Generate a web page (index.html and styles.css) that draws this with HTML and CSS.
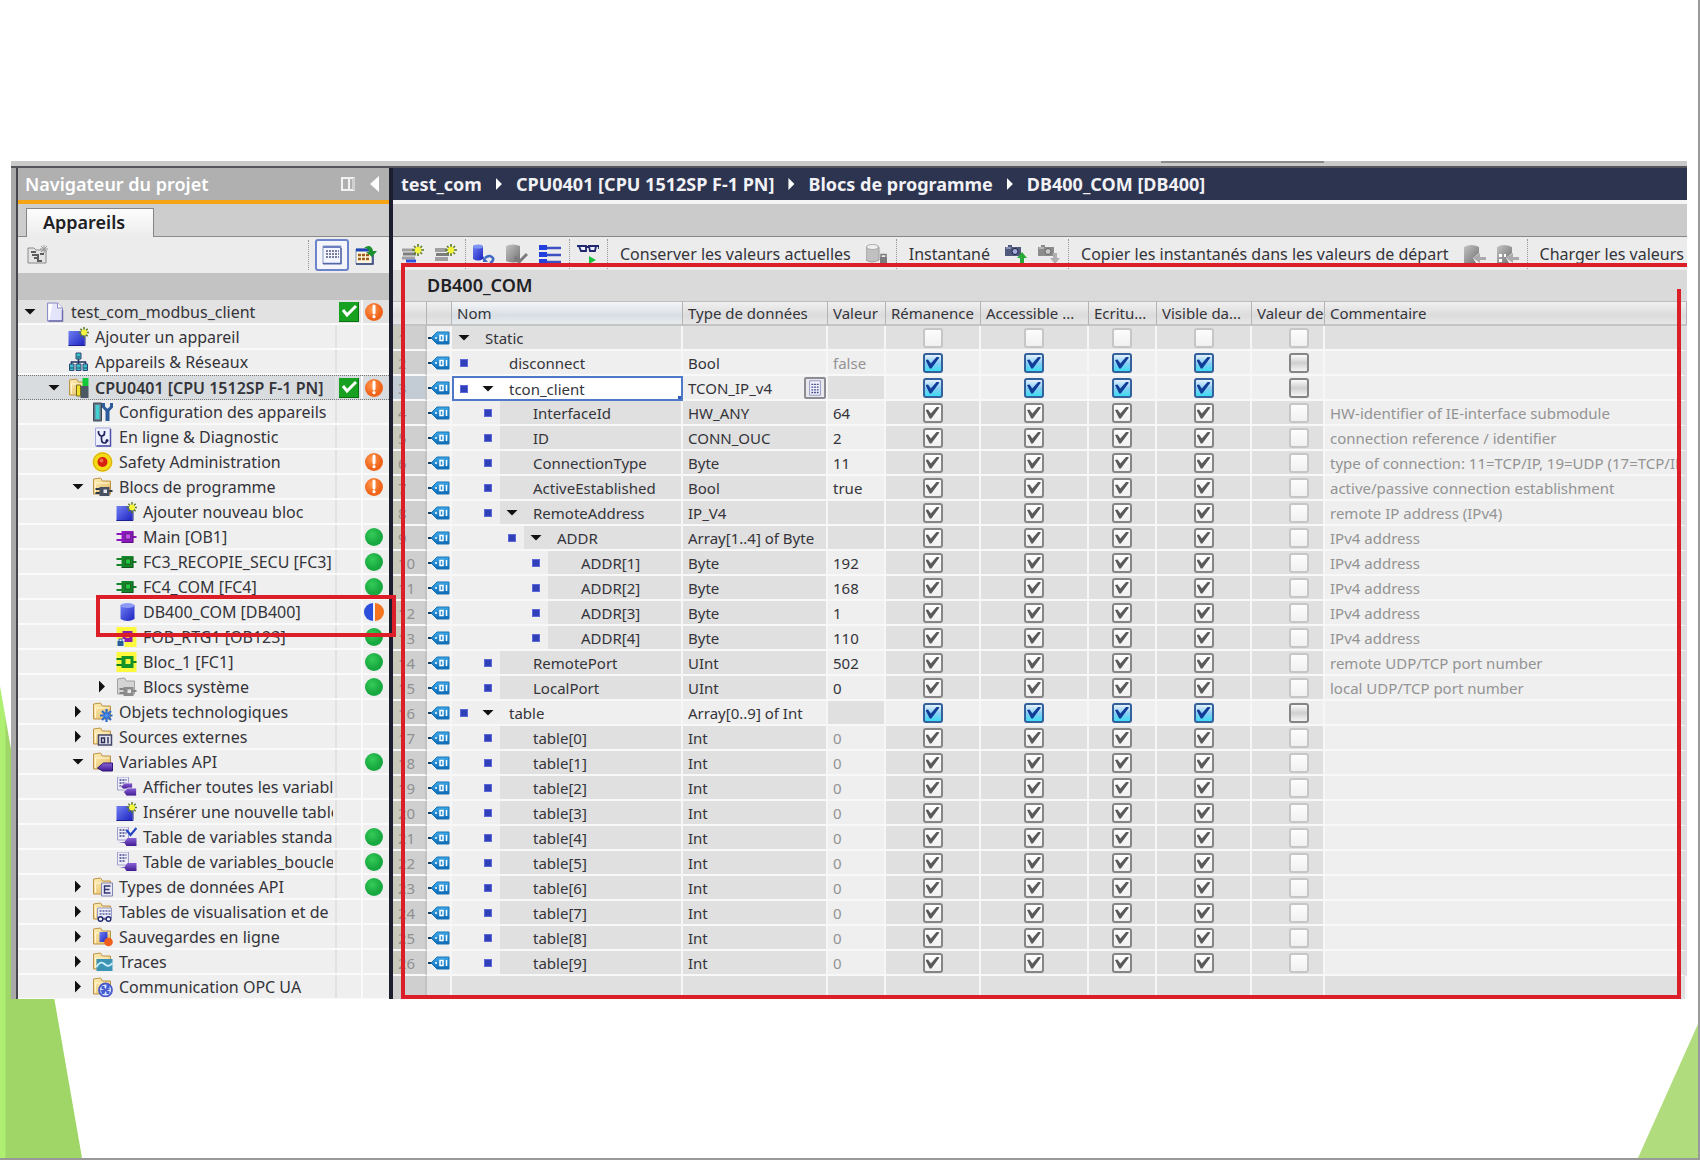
FILE: index.html
```html
<!DOCTYPE html>
<html lang="fr">
<head>
  <meta charset="UTF-8" />
  <meta name="viewport" content="width=device-width, initial-scale=1.0" />
  <title>DB400_COM [DB400]</title>
  <link rel="stylesheet" href="styles.css">
</head>
<body>
  <!-- Icon sprites -->
  <svg class="sprites" aria-hidden="true">
    <defs>
      <linearGradient id="gBlue" x1="0" y1="0" x2="1" y2="1"><stop offset="0" stop-color="#6f7ff2"/><stop offset="1" stop-color="#1c22c0"/></linearGradient>
      <linearGradient id="gGrey" x1="0" y1="0" x2="1" y2="1"><stop offset="0" stop-color="#c4c4c4"/><stop offset="1" stop-color="#707070"/></linearGradient>
      <linearGradient id="gFolder" x1="0" y1="0" x2="1" y2="1"><stop offset="0" stop-color="#fff0b8"/><stop offset="1" stop-color="#e2b860"/></linearGradient>
      <linearGradient id="gTag" x1="0" y1="0" x2="0" y2="1"><stop offset="0" stop-color="#3fa9e8"/><stop offset="1" stop-color="#0c68b4"/></linearGradient>
      <linearGradient id="gPurple" x1="0" y1="0" x2="0" y2="1"><stop offset="0" stop-color="#8a63d8"/><stop offset="1" stop-color="#401a92"/></linearGradient>
      <radialGradient id="gOrange" cx="40%" cy="35%"><stop offset="0" stop-color="#ff9a50"/><stop offset="1" stop-color="#f0641a"/></radialGradient>
      <radialGradient id="gGreen" cx="40%" cy="35%"><stop offset="0" stop-color="#34cc58"/><stop offset="1" stop-color="#18a840"/></radialGradient>
    </defs>
    <symbol id="star" viewBox="0 0 12 12"><path d="M6 0V12M0 6H12M2 2L10 10M10 2L2 10" stroke="#5a7a20" stroke-width="1.6"/><circle cx="6" cy="6" r="3.2" fill="#f4f43c"/></symbol>
    <symbol id="folder" viewBox="0 0 20 20"><path d="M1 17V2L8 1L10 4H18V17Z" fill="url(#gFolder)" stroke="#bd9446"/><path d="M3 16V6H17" fill="none" stroke="#fff6d4"/></symbol>
    <symbol id="page" viewBox="0 0 20 20"><path d="M3 1H13L18 6V19H3Z" fill="#e4e4fa" stroke="#8c8cc4"/><path d="M4 2H8L5 18H4Z" fill="#fff"/><path d="M13 1V6H18" fill="#fff" stroke="#8c8cc4"/><path d="M4 19H18V8" fill="none" stroke="#6c6cac" stroke-width="1.5"/></symbol>
    <symbol id="add" viewBox="0 0 20 20"><path d="M0 4H16V19H0Z" fill="url(#gBlue)"/><path d="M0 18.500H16.500V8" fill="none" stroke="#1c2090"/><use href="#star" x="10" y="0" width="11" height="11"/></symbol>
    <symbol id="network" viewBox="0 0 20 20"><path d="M10 7V10M3 13V10H17V13M10 10V13" stroke="#203060" stroke-width="1.6" fill="none"/><g fill="#3cc0c8" stroke="#304878"><path d="M7.500 1H12.500V7H7.500Z M1 12H5.500V18.500H1Z M7.500 12H12.500V18.500H7.500Z M14.500 12H19V18.500H14.500Z"/></g><path d="M8 5H12M1 16H5M8 16H12M15 16H19" stroke="#205070"/></symbol>
    <symbol id="cpu" viewBox="0 0 20 20"><use href="#folder"/><path d="M12 8H20V20H12Z" fill="#4c5864"/><path d="M8 7H12V18H8Z" fill="#f0e02c" stroke="#74681c"/><path d="M14 0H20V8H14Z" fill="#14c83c"/></symbol>
    <symbol id="config" viewBox="0 0 20 20"><path d="M1 1H9V19H1Z" fill="#687888" stroke="#384858"/><path d="M3 3H7V17H3Z" fill="#44d0d0"/><path d="M15 8V19" stroke="#2c5c9c" stroke-width="4"/><path d="M11 1V5L14 8H16L19 5V1" fill="none" stroke="#2c5c9c" stroke-width="3"/></symbol>
    <symbol id="diag" viewBox="0 0 20 20"><path d="M3 1H18V19H3Z" fill="#eef0ff" stroke="#a4a8dc"/><path d="M18 2V19H4" fill="none" stroke="#4c50a8" stroke-width="1.500"/><path d="M6 4V6Q7 9 9 9Q12 9 12 6V4M9 9V12Q9 16 12 16Q14 16 14 14" fill="none" stroke="#20245c" stroke-width="1.700"/><circle cx="14.500" cy="13.500" r="1.500" fill="#20245c"/></symbol>
    <symbol id="safety" viewBox="0 0 20 20"><circle cx="10" cy="10" r="10" fill="#f4dc14"/><circle cx="10" cy="10" r="9" fill="none" stroke="#d0a818"/><circle cx="10" cy="10" r="5" fill="#d82010"/><circle cx="9" cy="8.500" r="2" fill="#f07048"/></symbol>
    <symbol id="chip" viewBox="0 0 20 20"><path d="M0 7H6M0 13H6M14 10H20" stroke="currentColor" stroke-width="2.200"/><path d="M5 4H17V16H5Z" fill="currentColor"/><path d="M9 7H14V12H9Z" fill="var(--core)" stroke="#222" stroke-opacity=".5"/><path d="M5 15.500H16.500V5" fill="none" stroke="#111" stroke-opacity=".4"/></symbol>
    <symbol id="blocks" viewBox="0 0 20 20"><use href="#folder"/><path d="M3 12H8M3 16H8M15 14H20" stroke="#303848" stroke-width="1.800"/><path d="M7 10H17V19H7Z" fill="#485064"/><path d="M11 12.500H14.500V16H11Z" fill="#e8e8f0"/></symbol>
    <symbol id="sysblocks" viewBox="0 0 20 20"><path d="M1 17V2L8 1L10 4H18V17Z" fill="#d4d4d4" stroke="#a0a0a0"/><path d="M3 12H8M3 16H8M15 14H20" stroke="#848484" stroke-width="1.800"/><path d="M7 10H17V19H7Z" fill="#8c8c8c"/><path d="M11 12.500H14.500V16H11Z" fill="#e8e8e8"/></symbol>
    <symbol id="db" viewBox="0 0 20 20"><path d="M4 3V17Q11 21 18 17V3Z" fill="url(#gBlue)"/><ellipse cx="11" cy="3.500" rx="7" ry="2.500" fill="#8c9cf4"/></symbol>
    <symbol id="fob" viewBox="0 0 20 20"><path d="M0 0H20V20H0Z" fill="#fcf83c"/><path d="M3 8H7M15 9H20" stroke="#6c1490" stroke-width="2"/><path d="M6 4H16V15H6Z" fill="#8c1cac"/><path d="M9 7H13V11H9Z" fill="#f8a838"/><path d="M0 12H8V20H0Z" fill="#e8f0f8"/><path d="M1 14H7V19H1Z" fill="#285c98"/><path d="M2.500 14V12H5.500V14" fill="none" stroke="#285c98"/></symbol>
    <symbol id="fsafe" viewBox="0 0 20 20"><path d="M0 0H20V20H0Z" fill="#fcf83c"/><path d="M0 7H6M0 13H6M14 10H20" stroke="#108020" stroke-width="2.200"/><path d="M5 4H17V16H5Z" fill="#149428"/><path d="M9 7H14V12H9Z" fill="#f4f43c"/></symbol>
    <symbol id="techno" viewBox="0 0 20 20"><use href="#folder"/><path d="M14 7V20M7.500 13.500H20M9.500 9L18.500 18M18.500 9L9.500 18" stroke="#2c6cd0" stroke-width="2.200"/><circle cx="14" cy="13.500" r="2" fill="#5090f0"/></symbol>
    <symbol id="sources" viewBox="0 0 20 20"><use href="#folder"/><path d="M6 8H19V18H6Z" fill="#e0e0f0" stroke="#444868" stroke-width="1.500"/><path d="M9 11H12V15.500H9ZM15.500 10V16.500" fill="none" stroke="#282c50" stroke-width="1.400"/></symbol>
    <symbol id="plctags" viewBox="0 0 20 20"><use href="#folder"/><path d="M5 16L11 11H20V19H10Z" fill="url(#gPurple)" stroke="#34147c"/></symbol>
    <symbol id="sheet" viewBox="0 0 20 20"><path d="M1 0H12V13H1Z" fill="#eeeefa" stroke="#a0a0cc"/><path d="M3 3H10M3 6H10M3 9H8" stroke="#404484" stroke-width="1.500" stroke-dasharray="2 1"/></symbol>
    <symbol id="alltags" viewBox="0 0 20 20"><use href="#sheet"/><path d="M4 10L8 6H16V12H7Z" fill="url(#gPurple)" stroke="#eee" stroke-width=".8"/><path d="M7 15L11 11H20V19H10Z" fill="url(#gPurple)" stroke="#eee" stroke-width=".8"/></symbol>
    <symbol id="stdtags" viewBox="0 0 20 20"><use href="#sheet"/><path d="M10 3L14 8L20 1" fill="none" stroke="#2444c8" stroke-width="2.200"/><path d="M2 15H8L11 11H20V19H10L8 16" fill="url(#gPurple)"/></symbol>
    <symbol id="tagtable" viewBox="0 0 20 20"><use href="#sheet"/><path d="M3 15H8L11 11H20V19H10L8 16" fill="url(#gPurple)"/></symbol>
    <symbol id="types" viewBox="0 0 20 20"><use href="#folder"/><path d="M9 6H20V19H9Z" fill="#e8e8f8" stroke="#8084b0"/><path d="M15 9H12V16H15M12 12.500H17M15 9H18M15 16H18" fill="none" stroke="#30346c" stroke-width="1.400"/></symbol>
    <symbol id="watch" viewBox="0 0 20 20"><use href="#folder"/><path d="M5 6H19V16H5Z" fill="#ececfa" stroke="#9498c4"/><path d="M7 9H18M7 12H18" stroke="#5c609c" stroke-width="1.400" stroke-dasharray="2 1"/><circle cx="8" cy="17" r="2.300" fill="#fff" stroke="#202874" stroke-width="1.400"/><circle cx="16" cy="17" r="2.300" fill="#fff" stroke="#202874" stroke-width="1.400"/><path d="M10 17H14" stroke="#202874"/></symbol>
    <symbol id="backup" viewBox="0 0 20 20"><use href="#folder"/><path d="M7 5H15V15H7Z" fill="url(#gBlue)"/><circle cx="16" cy="15" r="4.300" fill="#f05c1c"/></symbol>
    <symbol id="traces" viewBox="0 0 20 20"><use href="#folder"/><path d="M4 7H20V19H4Z" fill="#3c94b4"/><path d="M4 15Q8 8 12 12T20 11" fill="none" stroke="#d0f0fc" stroke-width="1.800"/></symbol>
    <symbol id="opc" viewBox="0 0 20 20"><use href="#folder"/><circle cx="13" cy="13" r="6.500" fill="#dce4ff" stroke="#4858c8" stroke-width="1.800"/><path d="M10 10L16 16M16 9L11 16M8 14L17 12" stroke="#4858c8" stroke-width="1.300"/><path d="M9 9h3v3h-3zM14 8h3v3h-3zM14 14h3v3h-3zM9 14h3v3h-3z" fill="#4060d8"/></symbol>
    <symbol id="tick" viewBox="0 0 20 20"><path d="M0 0H20V20H0Z" fill="#18a020"/><path d="M0 19.500H19.500V0" fill="none" stroke="#087010"/><path d="M4 8L8 13L17 4" fill="none" stroke="#fff" stroke-width="3"/></symbol>
    <symbol id="warn" viewBox="0 0 20 20"><circle cx="10" cy="10" r="9" fill="url(#gOrange)"/><path d="M10 4V11" stroke="#fff" stroke-width="3" stroke-linecap="round"/><circle cx="10" cy="14.700" r="1.600" fill="#fff"/></symbol>
    <symbol id="ok" viewBox="0 0 20 20"><circle cx="10" cy="10" r="9" fill="url(#gGreen)"/></symbol>
    <symbol id="half" viewBox="0 0 20 20"><path d="M9 1A9 9 0 0 0 9 19Z" fill="#2c50dc"/><path d="M11 1A9 9 0 0 1 11 19Z" fill="#f47420"/></symbol>
    <symbol id="tag" viewBox="0 0 22 14"><path d="M0 7H5" stroke="#104068" stroke-width="2"/><path d="M3 7L9 1H21V13H9Z" fill="url(#gTag)" stroke="#1874b8"/><path d="M12 4.500H15V9.500H12ZM18.500 4V10" fill="none" stroke="#fff" stroke-width="1.500"/><circle cx="8" cy="7" r="1" fill="#fff"/></symbol>
    <symbol id="newfolder" viewBox="0 0 22 20"><path d="M1 18V3H7L9 5H19V18Z" fill="#e4e4e4" stroke="#8a8a8a"/><path d="M4 7H9M5 10H11V16H15M7 13H10M13 9H17" fill="none" stroke="#5c5c5c" stroke-width="2"/><path d="M17 0V8M13 4H21M14 1L20 7M20 1L14 7" stroke="#999"/></symbol>
    <symbol id="listview" viewBox="0 0 20 20"><path d="M1 1H19V19H1Z" fill="#f4f6ff" stroke="#8c98c4"/><path d="M1 2H19" stroke="#6c80c0" stroke-width="2"/><path d="M4 6H17M4 9H17M4 12H17" stroke="#505880" stroke-width="1.500" stroke-dasharray="2 1"/><path d="M1 18.500H19V3" fill="none" stroke="#5468a8" stroke-width="1.500"/></symbol>
    <symbol id="opennew" viewBox="0 0 22 20"><path d="M1 4H17V19H1Z" fill="#fff8e0" stroke="#8c98b8"/><path d="M1 5H14" stroke="#2048b8" stroke-width="3"/><path d="M3 10H14M3 14H14" stroke="#a05c18" stroke-width="2.500" stroke-dasharray="3 1"/><path d="M1 19H18V10" fill="none" stroke="#283c78" stroke-width="1.500"/><path d="M9 3Q16 -2 18 6H22L17 12L11 7H14Q14 3 9 3Z" fill="#1c9030"/></symbol>
    <symbol id="rowadd" viewBox="0 0 22 20"><path d="M0 6H13M0 14H13" stroke="#a0a0a0" stroke-width="3"/><path d="M1 10H14" stroke="#7c7c7c" stroke-width="3"/><path d="M4 17H14" stroke="#2c50dc" stroke-width="3"/><use href="#star" x="10" y="0" width="12" height="12"/></symbol>
    <symbol id="rowins" viewBox="0 0 22 20"><path d="M0 6H12M0 15H13" stroke="#a0a0a0" stroke-width="4"/><path d="M1 10.500H14" stroke="#7c7c7c" stroke-width="3"/><use href="#star" x="10" y="0" width="12" height="12"/></symbol>
    <symbol id="dbreset" viewBox="0 0 22 20"><path d="M0 2V15Q5 18 10 15V2Z" fill="url(#gBlue)"/><ellipse cx="5" cy="2.500" rx="5" ry="2" fill="#7c94f4"/><path d="M12 14Q17 10 20 14Q21 17 17 19" fill="none" stroke="#4068c4" stroke-width="2.500"/><path d="M10 12V18H15Z" fill="#4068c4"/></symbol>
    <symbol id="dbcheck" viewBox="0 0 22 20"><path d="M0 2Q7 -1 14 2V17Q7 20 0 17Z" fill="url(#gGrey)"/><path d="M9 13L13 18L21 10" fill="none" stroke="#7c7c7c" stroke-width="3"/></symbol>
    <symbol id="expand" viewBox="0 0 22 20"><path d="M0 3.500H8M0 10.500H8M0 17.500H8" stroke="#2440dc" stroke-width="5"/><path d="M8 4H22M8 11H22M8 18H22" stroke="#3c50c4" stroke-width="2.500"/></symbol>
    <symbol id="glasses" viewBox="0 0 22 20"><path d="M2 2H9V7H4ZM12 2H19L18 7H13ZM9 3H12M0 2H3M18 2H22V5" fill="#eef" stroke="#202870" stroke-width="1.800"/><path d="M12 12L19 16L12 20Z" fill="#1cc040"/></symbol>
    <symbol id="dblock" viewBox="0 0 22 20"><path d="M0 3V16Q6 20 13 16V3Z" fill="#c0c0c0" stroke="#9c9c9c"/><ellipse cx="6.500" cy="3" rx="6" ry="2.500" fill="#efefef" stroke="#aaa"/><path d="M14 13H21V20H14Z" fill="#7c7c7c"/><path d="M15 13V10.500H20V13" fill="none" stroke="#7c7c7c" stroke-width="1.500"/></symbol>
    <symbol id="camup" viewBox="0 0 22 20"><path d="M0 3H3V1H7V3H16V12H0Z" fill="#50587c"/><circle cx="10" cy="7.500" r="3" fill="#a4b0e0" stroke="#1c2040"/><path d="M1 4H6" stroke="#c0c8e8"/><path d="M17 8L22 14H19V20H15V14H12Z" fill="#28a838"/></symbol>
    <symbol id="camdown" viewBox="0 0 22 20"><path d="M0 3H3V1H7V3H16V12H0Z" fill="#8c8c8c"/><circle cx="10" cy="7.500" r="3" fill="#c8c8c8" stroke="#666"/><path d="M1 4H6" stroke="#ddd"/><path d="M15 9H19V14H22L17 20L12 14H15Z" fill="#b0b0b0"/></symbol>
    <symbol id="dbleft" viewBox="0 0 22 20"><path d="M0 3Q7 -1 15 3V9L9 14L12 19H0Z" fill="url(#gGrey)"/><path d="M22 13H16V9L9 14L16 19V16H22Z" fill="#aaa"/></symbol>
    <symbol id="dbleftgrid" viewBox="0 0 22 20"><path d="M0 3Q7 -1 15 3V9L9 14L12 19H0Z" fill="url(#gGrey)"/><path d="M2 10H5V13H2ZM7 10H9V13H7ZM2 15H5V18H2Z" fill="#fff"/><path d="M22 13H16V9L9 14L16 19V16H22Z" fill="#aaa"/></symbol>
    <symbol id="pick" viewBox="0 0 20 20"><path d="M4 2H16V18H4Z" fill="#f4f4ff" stroke="#8c90bc"/><path d="M6 6H15M6 9H15M6 12H15M6 15H15" stroke="#3c4488" stroke-width="1.500" stroke-dasharray="2 1"/></symbol>
  </svg>

  <div class="deco deco-left"></div>
  <div class="deco deco-right"></div>

  <main class="window">
    <div class="topstrip"><span class="topfield"></span></div>
    <div class="panes">
      <aside class="nav">
        <header class="nav-head">
          <h2>Navigateur du projet</h2>
          <button class="dock" aria-label="Ancrer"></button>
          <button class="fold" aria-label="Réduire"></button>
        </header>
        <div class="tabs"><button class="tab">Appareils</button></div>
        <div class="nav-tools">
          <button class="tool" aria-label="Nouveau groupe"><svg class="ic"><use href="#newfolder"/></svg></button>
          <span class="sep push"></span>
          <button class="tool boxed" aria-label="Vue détaillée"><svg class="ic"><use href="#listview"/></svg></button>
          <button class="tool" aria-label="Ouvrir"><svg class="ic"><use href="#opennew"/></svg></button>
        </div>
        <div class="nav-band"></div>
        <ul class="tree" id="tree"></ul>
      </aside>

      <section class="editor">
        <nav class="crumbs">
          <a href="#">test_com</a><i></i><a href="#">CPU0401 [CPU 1512SP F-1 PN]</a><i></i><a href="#">Blocs de programme</a><i></i><a href="#">DB400_COM [DB400]</a>
        </nav>
        <div class="editor-band"></div>
        <div class="toolbar">
          <button class="tool" aria-label="Insérer ligne"><svg class="ic"><use href="#rowadd"/></svg></button>
          <button class="tool" aria-label="Ajouter ligne"><svg class="ic"><use href="#rowins"/></svg></button>
          <span class="sep"></span>
          <button class="tool" aria-label="Réinitialiser"><svg class="ic"><use href="#dbreset"/></svg></button>
          <button class="tool" aria-label="Vérifier"><svg class="ic"><use href="#dbcheck"/></svg></button>
          <button class="tool" aria-label="Mode étendu"><svg class="ic"><use href="#expand"/></svg></button>
          <span class="sep"></span>
          <button class="tool" aria-label="Visualiser tout"><svg class="ic"><use href="#glasses"/></svg></button>
          <span class="sep"></span>
          <button class="text">Conserver les valeurs actuelles</button>
          <button class="tool" aria-label="Verrouiller"><svg class="ic"><use href="#dblock"/></svg></button>
          <span class="sep"></span>
          <button class="text">Instantané</button>
          <button class="tool" aria-label="Charger instantané"><svg class="ic"><use href="#camup"/></svg></button>
          <button class="tool" aria-label="Copier instantané"><svg class="ic"><use href="#camdown"/></svg></button>
          <span class="sep"></span>
          <button class="text">Copier les instantanés dans les valeurs de départ</button>
          <button class="tool" aria-label="Copier tout"><svg class="ic"><use href="#dbleft"/></svg></button>
          <button class="tool" aria-label="Copier sélection"><svg class="ic"><use href="#dbleftgrid"/></svg></button>
          <span class="sep"></span>
          <button class="text">Charger les valeurs</button>
        </div>
        <h1>DB400_COM</h1>
        <table class="grid">
          <colgroup>
            <col class="c-num"><col class="c-tag"><col class="c-name"><col class="c-type"><col class="c-val"><col class="c-rem"><col class="c-acc"><col class="c-ecr"><col class="c-vis"><col class="c-reg"><col>
          </colgroup>
          <thead>
            <tr><th></th><th></th><th>Nom</th><th>Type de données</th><th>Valeur</th><th>Rémanence</th><th>Accessible ...</th><th>Ecritu...</th><th>Visible da...</th><th>Valeur de</th><th>Commentaire</th></tr>
          </thead>
          <tbody id="rows"></tbody>
        </table>
      </section>
    </div>

    <!-- Red marks over the interface -->
    <div class="mark mark-db"></div>
    <div class="mark mark-grid"></div>
    <div class="mark mark-right"></div>
  </main>

  <script src="script.js"></script>
</body>
</html>
```
FILE: styles.css
```css
* {
  box-sizing: border-box;
}

body {
  margin: 0;
  min-height: 100vh;
  position: relative;
  overflow: hidden;
  background: #fff;
  border-right: 2px solid #999;
  border-bottom: 2px solid #999;
  font-family: "Noto Sans", "Open Sans", sans-serif;
  font-size: 16px;
  color: #34343a;
}

button {
  font: inherit;
  color: inherit;
  border: 0;
  padding: 0;
  background: none;
}

h1, h2 {
  margin: 0;
  font-size: 18px;
  font-weight: 600;
}

.sprites {
  position: absolute;
  width: 0;
  height: 0;
}

.ic {
  display: block;
  width: 22px;
  height: 20px;
}

/* green shapes behind the window */
.deco {
  position: absolute;
  bottom: 0;
}

.deco-left {
  left: 0;
  width: 82px;
  height: 472px;
  background: linear-gradient(90deg, #aeee70 0, #aeee70 5px, #a0d668 6px);
  clip-path: polygon(0 0, 100% 100%, 0 100%);
}

.deco-right {
  right: 0;
  width: 60px;
  height: 134px;
  background: #b0dc7e;
  clip-path: polygon(100% 0, 100% 100%, 0 100%);
}

.window {
  position: relative;
  margin: 161px 11px 0 11px;
  border-left: 5px solid #a9a9a9;
}

.topstrip {
  height: 7px;
  margin-left: -5px;
  background: #c9c9c9;
  border-bottom: 2px solid #55565c;
}

.topfield {
  display: block;
  width: 163px;
  height: 2px;
  margin-left: auto;
  margin-right: 363px;
  background: #8a8a8a;
}

.panes {
  display: flex;
  border-left: 2px solid #45464e;
}

/* project tree */
.nav {
  flex: 0 0 375px;
  min-width: 0;
  border-right: 4px solid #1c1e30;
}

.nav-head {
  display: flex;
  align-items: center;
  height: 36px;
  padding: 0 10px 0 7px;
  background: #b0b0b0;
  border-bottom: 4px solid #f4a414;
  color: #fff;
}

.nav-head h2 {
  flex: 1;
}

.dock {
  width: 14px;
  height: 14px;
  border: 2px solid #f2f2f2;
  border-right: 3px solid #d0d0d0;
  background: linear-gradient(90deg, #b0b0b0 5px, #f2f2f2 5px, #f2f2f2 7px, #b0b0b0 7px);
}

.fold {
  width: 9px;
  height: 16px;
  margin-left: 15px;
  background: #fff;
  clip-path: polygon(100% 0, 100% 100%, 0 50%);
}

.tabs {
  height: 33px;
  padding: 4px 8px 0;
  background: #cdcdcd;
  border-bottom: 1px solid #8a8a8a;
}

.tab {
  width: 128px;
  height: 29px;
  background: linear-gradient(#fdfdfd, #ececec);
  border: 1px solid #858585;
  border-bottom: 0;
  font-size: 18px;
  line-height: 24px;
  font-weight: 600;
  color: #202024;
  padding: 0 12px 3px 0;
}

.nav-tools {
  display: flex;
  align-items: center;
  gap: 6px;
  height: 36px;
  padding: 0 12px 0 9px;
  background: #ececec;
}

.push {
  margin-left: auto;
}

.boxed {
  padding: 4px;
  border: 2px solid #6c84cc;
  border-radius: 3px;
  background: #f4f6fc;
}

.nav-band {
  height: 27px;
  background: #c3c3c3;
}

.tree {
  list-style: none;
  margin: 0;
  padding: 0;
  height: 699px;
  overflow: hidden;
}

.tree li {
  display: grid;
  grid-template-columns: minmax(0, 1fr) 26px 28px;
  height: 25px;
  line-height: 22px;
  background: #efefef;
  border-bottom: 2px solid #fafafa;
}

.tree li.root {
  background: #e2e2e2;
}

.tree li.selected {
  background: #d8dcdf;
  border-top: 1px dotted #777;
  border-bottom: 1px dotted #777;
  font-weight: 600;
}

.node {
  display: flex;
  align-items: center;
  overflow: hidden;
  margin-right: 2px;
  white-space: nowrap;
}

.node svg {
  flex: none;
  width: 21px;
  height: 20px;
  margin: 0 6px 0 2px;
}

.state {
  display: flex;
  align-items: center;
  justify-content: center;
  border-left: 2px solid #e2e2e2;
}

.state + .state {
  padding-right: 4px;
  border-left-color: #fafafa;
}

.state svg {
  width: 20px;
  height: 20px;
}

.slot {
  flex: none;
  display: flex;
  align-items: center;
  justify-content: center;
  width: 24px;
  height: 100%;
}

.arrow {
  width: 6px;
  height: 12px;
  background: #111;
  clip-path: polygon(0 0, 100% 50%, 0 100%);
}

.arrow.open {
  width: 12px;
  height: 6px;
  clip-path: polygon(0 0, 100% 0, 50% 100%);
}

.violet { color: #8c18c0; --core: #c850f4; }
.green { color: #148428; --core: #24c83c; }

/* editor */
.editor {
  flex: 1;
  min-width: 0;
}

.crumbs {
  display: flex;
  align-items: center;
  gap: 14px;
  height: 32px;
  padding-left: 8px;
  background: #2d344f;
  white-space: nowrap;
}

.crumbs a {
  color: #f2f2f6;
  text-decoration: none;
  font-size: 18px;
  font-weight: 700;
}

.crumbs i {
  width: 6px;
  height: 12px;
  background: #fff;
  clip-path: polygon(0 0, 100% 50%, 0 100%);
}

.editor-band {
  height: 37px;
  background: #cbcbcb;
  border-top: 4px solid #f4f4f4;
  border-bottom: 1px solid #868686;
}

.toolbar {
  display: flex;
  align-items: center;
  height: 33px;
  padding: 0 0 0 4px;
  background: #ececec;
  overflow: hidden;
  white-space: nowrap;
}

.toolbar .tool {
  flex: none;
  padding: 0 6px 0 5px;
}

.toolbar .text {
  flex: none;
  padding: 0 10px;
}

.sep {
  flex: none;
  height: 30px;
  margin: 0 2px;
  border-left: 1px dotted #999;
}

.nav-tools .push {
  margin: 0 0 0 auto;
}

h1 {
  height: 31px;
  padding-left: 34px;
  background: #dadada;
  line-height: 31px;
  color: #202024;
}

.grid {
  width: 100%;
  table-layout: fixed;
  border-collapse: separate;
  border-spacing: 0;
  font-size: 15px;
}

.c-num { width: 34px; }
.c-tag { width: 25px; }
.c-name { width: 231px; }
.c-type { width: 145px; }
.c-val { width: 58px; }
.c-rem { width: 95px; }
.c-acc { width: 108px; }
.c-ecr { width: 68px; }
.c-vis { width: 95px; }
.c-reg { width: 73px; }

.grid th,
.grid td {
  height: 25px;
  padding: 0 0 0 5px;
  overflow: hidden;
  white-space: nowrap;
  text-align: left;
  line-height: 22px;
}

.grid th {
  font-weight: 400;
  background: linear-gradient(#f0f0f0, #dcdcdc 60%, #e6e6e6);
  border-top: 1px solid #bdbdbd;
  border-right: 1px solid #b4b4b4;
  border-bottom: 2px solid #c4c4c4;
}

.grid th:nth-child(3) {
  background: linear-gradient(#f4f6f8, #d8dfe4 60%, #e6ebee);
}

.grid td {
  background: #e0e0e0;
  border-right: 2px solid #f6f6f6;
  border-bottom: 2px solid #f8f8f8;
}

.grid tr.light td,
.grid td.editable,
.grid td.comment,
.grid td.tagcell {
  background: #efefef;
}

.grid tr.light td.empty,
.grid tr.top td.comment {
  background: #e0e0e0;
}

.grid td.comment {
  border-right: 8px solid #dedede;
}

.grid td.num,
.grid tr.light td.num {
  background: linear-gradient(90deg, #c9c9bb 8px, #cfcfcf 8px);
  border-right-color: #c2c2c2;
  color: #909090;
}

.grid tr.active td.num {
  background: #c3ccd4;
}

.grid td.tagcell {
  padding: 0 0 0 1px;
}

.tagcell svg {
  display: block;
  width: 22px;
  height: 14px;
}

.grid td.name {
  padding: 0;
}

.line {
  display: flex;
  align-items: center;
  height: 23px;
}

.line .pad {
  background: #efefef;
}

.line b {
  width: 8px;
  height: 8px;
  background: #3040b8;
  border: 1px solid #5c68d8;
}

.line .label {
  padding-left: 9px;
}

.grid tr.active td.name {
  position: relative;
  background: #fff;
  border: 2px solid #5078c8;
}

.active .line {
  height: 21px;
  margin-left: -2px;
}

.active .name::after {
  content: "";
  position: absolute;
  right: -2px;
  bottom: -2px;
  width: 5px;
  height: 5px;
  background: #2c5cc0;
}

.typed {
  display: flex;
  align-items: center;
  justify-content: space-between;
  height: 23px;
}

.pick {
  width: 22px;
  height: 22px;
  border: 2px solid #8c8c94;
  border-radius: 2px;
  background: #e8e8ec;
}

.pick svg {
  display: block;
  width: 18px;
  height: 18px;
}

.grid td.default,
.grid td.comment {
  color: #939393;
}

.grid td.check {
  padding: 0;
  text-align: center;
}

.grid td.check:nth-child(10) {
  padding-left: 22px;
}

input[type="checkbox"] {
  appearance: none;
  display: block;
  width: 20px;
  height: 20px;
  margin: 0 auto;
  border: 2px solid #858585;
  border-radius: 3px;
  background: linear-gradient(#fdfdfd, #f0f0f0);
}

input[type="checkbox"].blank {
  border-color: #c6c6c6;
}

input[type="checkbox"].free {
  background: linear-gradient(#fafafa, #cfcfcf 50%, #f4f4f4);
}

input:checked::before {
  content: "";
  display: block;
  width: 14px;
  height: 12px;
  margin: 2px 1px;
  background: #5a5a5a;
  clip-path: polygon(0 30%, 18% 25%, 38% 58%, 82% 0, 100% 8%, 42% 100%, 30% 100%);
}

input[type="checkbox"].on {
  border-color: #34609c;
  background: linear-gradient(#e4f2fc, #8ccdf4 50%, #3cdcf4);
}

input.on:checked::before {
  background: #103c98;
}

.grid tr.last td {
  height: 23px;
  background: #e0e0e0;
  border-bottom: 0;
}

.grid tr.last td.num {
  background: #cfcfcf;
}

/* red marks */
.mark {
  position: absolute;
  border: 4px solid #dc1e28;
  pointer-events: none;
}

.mark-db {
  left: 80px;
  top: 434px;
  width: 300px;
  height: 42px;
}

.mark-grid {
  left: 385px;
  right: 0;
  top: 102px;
  bottom: 0;
  border-right: 0;
  border-bottom: 0;
}

.mark-right {
  left: 385px;
  right: 6px;
  top: 128px;
  bottom: 0;
  border-top: 0;
  border-left: 0;
}
```
FILE: script.js
```js
// level, icon, label, arrow, first state, second state
const nodes = [
  [0, "page", "test_com_modbus_client", "open", "tick", "warn"],
  [1, "add", "Ajouter un appareil"],
  [1, "network", "Appareils & Réseaux"],
  [1, "cpu", "CPU0401 [CPU 1512SP F-1 PN]", "open", "tick", "warn"],
  [2, "config", "Configuration des appareils"],
  [2, "diag", "En ligne & Diagnostic"],
  [2, "safety", "Safety Administration", "", "", "warn"],
  [2, "blocks", "Blocs de programme", "open", "", "warn"],
  [3, "add", "Ajouter nouveau bloc"],
  [3, "chip violet", "Main [OB1]", "", "", "ok"],
  [3, "chip green", "FC3_RECOPIE_SECU [FC3]", "", "", "ok"],
  [3, "chip green", "FC4_COM [FC4]", "", "", "ok"],
  [3, "db", "DB400_COM [DB400]", "", "", "half"],
  [3, "fob", "FOB_RTG1 [OB123]", "", "", "ok"],
  [3, "fsafe", "Bloc_1 [FC1]", "", "", "ok"],
  [3, "sysblocks", "Blocs système", "closed", "", "ok"],
  [2, "techno", "Objets technologiques", "closed"],
  [2, "sources", "Sources externes", "closed"],
  [2, "plctags", "Variables API", "open", "", "ok"],
  [3, "alltags", "Afficher toutes les variables"],
  [3, "add", "Insérer une nouvelle table"],
  [3, "stdtags", "Table de variables standard", "", "", "ok"],
  [3, "tagtable", "Table de variables_boucle", "", "", "ok"],
  [2, "types", "Types de données API", "closed", "", "ok"],
  [2, "watch", "Tables de visualisation et de", "closed"],
  [2, "backup", "Sauvegardes en ligne", "closed"],
  [2, "traces", "Traces", "closed"],
  [2, "opc", "Communication OPC UA", "closed"]
];

// level, name, type, value, comment, open
const vars = [
  [0, "Static", "", "", "", true],
  [1, "disconnect", "Bool", "false", ""],
  [1, "tcon_client", "TCON_IP_v4", "", "", true],
  [2, "InterfaceId", "HW_ANY", "64", "HW-identifier of IE-interface submodule"],
  [2, "ID", "CONN_OUC", "2", "connection reference / identifier"],
  [2, "ConnectionType", "Byte", "11", "type of connection: 11=TCP/IP, 19=UDP (17=TCP/IP)"],
  [2, "ActiveEstablished", "Bool", "true", "active/passive connection establishment"],
  [2, "RemoteAddress", "IP_V4", "", "remote IP address (IPv4)", true],
  [3, "ADDR", "Array[1..4] of Byte", "", "IPv4 address", true],
  [4, "ADDR[1]", "Byte", "192", "IPv4 address"],
  [4, "ADDR[2]", "Byte", "168", "IPv4 address"],
  [4, "ADDR[3]", "Byte", "1", "IPv4 address"],
  [4, "ADDR[4]", "Byte", "110", "IPv4 address"],
  [2, "RemotePort", "UInt", "502", "remote UDP/TCP port number"],
  [2, "LocalPort", "UInt", "0", "local UDP/TCP port number"],
  [1, "table", "Array[0..9] of Int", "", "", true]
];
for (let i = 0; i < 10; i++) {
  vars.push([2, `table[${i}]`, "Int", "0", ""]);
}

const esc = (s) => s.replace(/&/g, "&amp;");
const slot = (inner, cls = "") => `<span class="slot ${cls}">${inner}</span>`;
const toggle = (open, label) =>
  `<button class="arrow ${open ? "open" : ""}" aria-label="${esc(label)}"></button>`;
const icon = (name, cls = "") => `<svg class="${cls}" aria-hidden="true"><use href="#${name}"/></svg>`;

document.getElementById("tree").innerHTML = nodes.map(([level, ic, label, arrow, s1, s2], i) => {
  const [name, tone] = ic.split(" ");
  const row = i === 0 ? "root" : i === 3 ? "selected" : "";
  return `<li class="${row}">
    <span class="node">${slot("").repeat(level)}${slot(arrow ? toggle(arrow === "open", label) : "")}${icon(name, tone)}<span>${esc(label)}</span></span>
    <span class="state">${s1 ? icon(s1) : ""}</span><span class="state">${s2 ? icon(s2) : ""}</span>
  </li>`;
}).join("");

const columns = ["Rémanence", "Accessible", "Ecriture", "Visible", "Valeur de réglage"];

function checks(level, name) {
  return columns.map((col, c) => {
    const last = c === 4;
    const checked = level > 0 && !last;
    let cls = "";
    if (level === 1) cls = last ? "free" : "on";
    else if (!checked) cls = "blank";
    return `<td class="check"><input type="checkbox" class="${cls}" aria-label="${col} ${name}" ${checked ? "checked" : ""}></td>`;
  }).join("");
}

const body = vars.map(([level, name, type, value, comment, open], i) => {
  let row = level === 1 ? "light" : level === 0 ? "top" : "";
  if (name === "tcon_client") row += " active";
  const gaps = level > 1 ? slot("", "pad").repeat(level - 1) : "";
  const mark = level > 0 ? slot("<b></b>", level > 1 ? "pad" : "") : "";
  const typeCell = name === "tcon_client"
    ? `<div class="typed">${type}<button class="pick" aria-label="Choisir le type">${icon("pick")}</button></div>`
    : type;
  const valueClass = (value ? "editable" : "empty") + (value === "false" || i > 15 ? " default" : "");
  return `<tr class="${row}"><td class="num">${i + 1}</td><td class="tagcell">${icon("tag")}</td>
    <td class="name"><div class="line">${gaps}${mark}${slot(open ? toggle(true, name) : "")}<span class="label">${name}</span></div></td>
    <td>${typeCell}</td><td class="${valueClass}">${value}</td>${checks(level, name)}<td class="comment">${comment}</td></tr>`;
}).join("");

document.getElementById("rows").innerHTML =
  body + `<tr class="last"><td class="num"></td>${"<td></td>".repeat(10)}</tr>`;
```
